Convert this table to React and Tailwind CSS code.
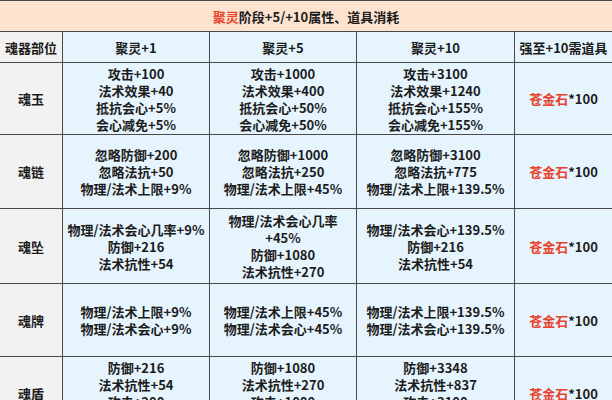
import React from 'react';

const rows = [
  {
    name: '魂玉',
    h: 'h-[71px]',
    cols: [
      ['攻击+100', '法术效果+40', '抵抗会心+5%', '会心减免+5%'],
      ['攻击+1000', '法术效果+400', '抵抗会心+50%', '会心减免+50%'],
      ['攻击+3100', '法术效果+1240', '抵抗会心+155%', '会心减免+155%'],
    ],
  },
  {
    name: '魂链',
    h: 'h-[73px]',
    cols: [
      ['忽略防御+200', '忽略法抗+50', '物理/法术上限+9%'],
      ['忽略防御+1000', '忽略法抗+250', '物理/法术上限+45%'],
      ['忽略防御+3100', '忽略法抗+775', '物理/法术上限+139.5%'],
    ],
  },
  {
    name: '魂坠',
    h: 'h-[74px]',
    cols: [
      ['物理/法术会心几率+9%', '防御+216', '法术抗性+54'],
      ['物理/法术会心几率', '+45%', '防御+1080', '法术抗性+270'],
      ['物理/法术会心+139.5%', '防御+216', '法术抗性+54'],
    ],
  },
  {
    name: '魂牌',
    h: 'h-[72px]',
    cols: [
      ['物理/法术上限+9%', '物理/法术会心+9%'],
      ['物理/法术上限+45%', '物理/法术会心+45%'],
      ['物理/法术上限+139.5%', '物理/法术会心+139.5%'],
    ],
  },
  {
    name: '魂盾',
    h: 'h-[72px]',
    cols: [
      ['防御+216', '法术抗性+54', '攻击+200', '法术效果+80'],
      ['防御+1080', '法术抗性+270', '攻击+1000', '法术效果+400'],
      ['防御+3348', '法术抗性+837', '攻击+3100', '法术效果+1240'],
    ],
  },
];

const cell = 'flex flex-col items-center justify-center text-center';

export default function App() {
  return (
    <div
      className="w-[612px] h-[400px] overflow-hidden bg-white text-[13px] leading-[17px] font-bold text-[#1c1c1c]"
      style={{ fontFamily: '"Noto Sans CJK SC", "Noto Sans", sans-serif' }}
    >
      <div className="grid grid-cols-[62px_146px_146px_157px_97px] gap-px bg-[#4a4a4a] border-t border-[#4a4a4a]">
        <div className={`${cell} col-span-5 h-[30px] bg-[#fde3cf]`}>
          <span>
            <span className="text-[#e8432d]">聚灵</span>阶段+5/+10属性、道具消耗
          </span>
        </div>

        <div className={`${cell} h-[30px] bg-[#f2f2f2]`}>魂器部位</div>
        <div className={`${cell} bg-[#e6f4fd]`}>聚灵+1</div>
        <div className={`${cell} bg-[#e6f4fd]`}>聚灵+5</div>
        <div className={`${cell} bg-[#e6f4fd]`}>聚灵+10</div>
        <div className={`${cell} bg-[#e6f4fd]`}>强至+10需道具</div>

        {rows.map(row => (
          <React.Fragment key={row.name}>
            <div className={`${cell} ${row.h} bg-[#f2f2f2]`}>{row.name}</div>
            {row.cols.map((lines, i) => (
              <div key={i} className={`${cell} bg-[#e6f4fd]`}>
                {lines.map(l => (
                  <div key={l}>{l}</div>
                ))}
              </div>
            ))}
            <div className={`${cell} bg-[#e6f4fd]`}>
              <div>
                <span className="text-[#e8432d]">苍金石</span>*100
              </div>
            </div>
          </React.Fragment>
        ))}
      </div>
    </div>
  );
}
